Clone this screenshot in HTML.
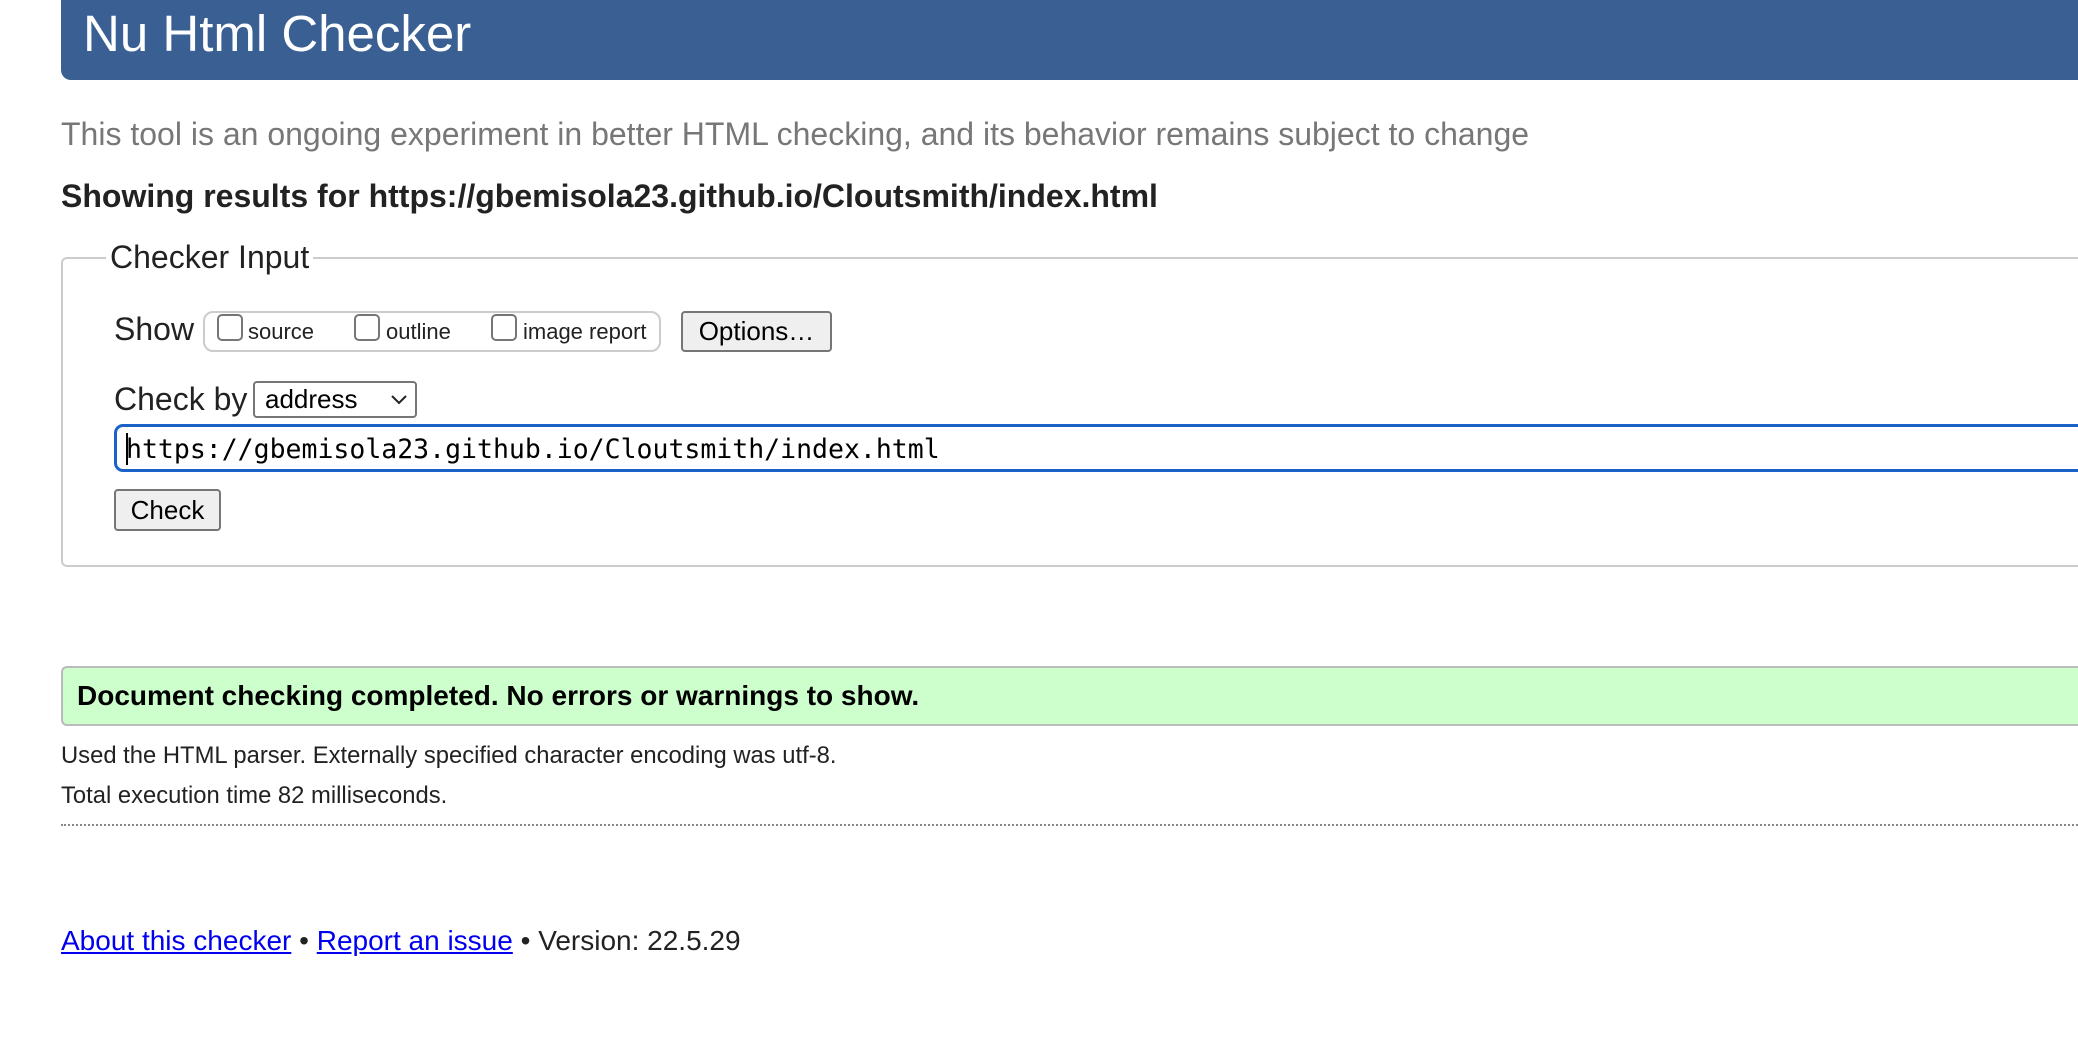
<!DOCTYPE html>
<html><head><meta charset="utf-8"><style>
html,body{margin:0;padding:0;background:#fff;width:2078px;height:1064px;overflow:hidden;font-family:"Liberation Sans",Arial,sans-serif;color:#222}
.a{position:absolute;white-space:nowrap}
#hdr{position:absolute;left:61px;top:0;width:2100px;height:80px;background:#3a5f93;border-bottom-left-radius:10px}
#hdr span{position:absolute;left:22px;top:4px;font-size:51px;color:#fff;line-height:60px}
.cb{position:absolute;width:22px;height:23px;border:2px solid #767676;border-radius:5px;background:#fff}
.btn{position:absolute;background:#efefef;border:2px solid #767676;border-radius:4px;font-size:26px;color:#000;text-align:center;box-sizing:border-box}
a{color:#0000ee}
</style></head><body>
<div id="hdr"><span>Nu Html Checker</span></div>
<div class="a" style="left:61px;top:115px;font-size:32px;color:#777;line-height:38px">This tool is an ongoing experiment in better HTML checking, and its behavior remains subject to change</div>
<div class="a" style="left:61px;top:177px;font-size:32px;font-weight:bold;color:#222;line-height:38px">Showing results for https://gbemisola23.github.io/Cloutsmith/index.html</div>

<div style="position:absolute;left:61px;top:257px;width:2100px;height:306px;border:2px solid #ccc;border-right:none;border-radius:6px 0 0 6px"></div>
<div class="a" style="left:106px;top:238px;background:#fff;padding:0 4px;font-size:32px;line-height:38px">Checker Input</div>

<div class="a" style="left:114px;top:310px;font-size:32px;line-height:38px">Show</div>
<div style="position:absolute;left:203px;top:311px;width:454px;height:37px;border:2px solid #ccc;border-radius:10px"></div>
<div class="cb" style="left:217px;top:314px"></div>
<div class="a" style="left:248px;top:318px;font-size:22px;line-height:28px">source</div>
<div class="cb" style="left:354px;top:314px"></div>
<div class="a" style="left:386px;top:318px;font-size:22px;line-height:28px">outline</div>
<div class="cb" style="left:491px;top:314px"></div>
<div class="a" style="left:523px;top:318px;font-size:22px;line-height:28px">image report</div>
<div class="btn" style="left:681px;top:311px;width:151px;height:41px;line-height:37px">Options…</div>

<div class="a" style="left:114px;top:380px;font-size:32px;line-height:38px">Check by</div>
<div style="position:absolute;left:253px;top:381px;width:164px;height:37px;border:2px solid #767676;border-radius:4px;box-sizing:border-box;font-size:26px;color:#000;line-height:33px;padding-left:10px;background:#fff">address
<svg style="position:absolute;right:8px;top:12px" width="16" height="10" viewBox="0 0 16 10"><path d="M1 1 L8 8 L15 1" fill="none" stroke="#222" stroke-width="2"/></svg></div>

<div style="position:absolute;left:114px;top:424px;width:2100px;height:48px;border:3px solid #1a62c8;border-right:none;border-radius:9px 0 0 9px;box-sizing:border-box"></div>
<div class="a" style="left:126px;top:432px;font-family:'DejaVu Sans Mono','Liberation Mono',monospace;font-size:26.5px;line-height:36px;color:#000">https://gbemisola23.github.io/Cloutsmith/index.html</div>
<div style="position:absolute;left:126px;top:433px;width:2px;height:32px;background:#000"></div>

<div class="btn" style="left:114px;top:489px;width:107px;height:42px;line-height:38px">Check</div>

<div style="position:absolute;left:61px;top:666px;width:2100px;height:60px;background:#ccffcc;border:2px solid #bbb;border-right:none;border-radius:6px 0 0 6px;box-sizing:border-box"></div>
<div class="a" style="left:77px;top:679px;font-size:28px;font-weight:bold;color:#000;line-height:34px">Document checking completed. No errors or warnings to show.</div>

<div class="a" style="left:61px;top:741px;font-size:23.8px;line-height:30px">Used the HTML parser. Externally specified character encoding was utf-8.</div>
<div class="a" style="left:61px;top:781px;font-size:23.8px;line-height:30px">Total execution time 82 milliseconds.</div>
<div style="position:absolute;left:61px;top:824px;width:2100px;border-top:2px dotted #888"></div>

<div class="a" style="left:61px;top:924px;font-size:28px;line-height:34px"><a href="#">About this checker</a> • <a href="#">Report an issue</a> • Version: 22.5.29</div>
</body></html>
